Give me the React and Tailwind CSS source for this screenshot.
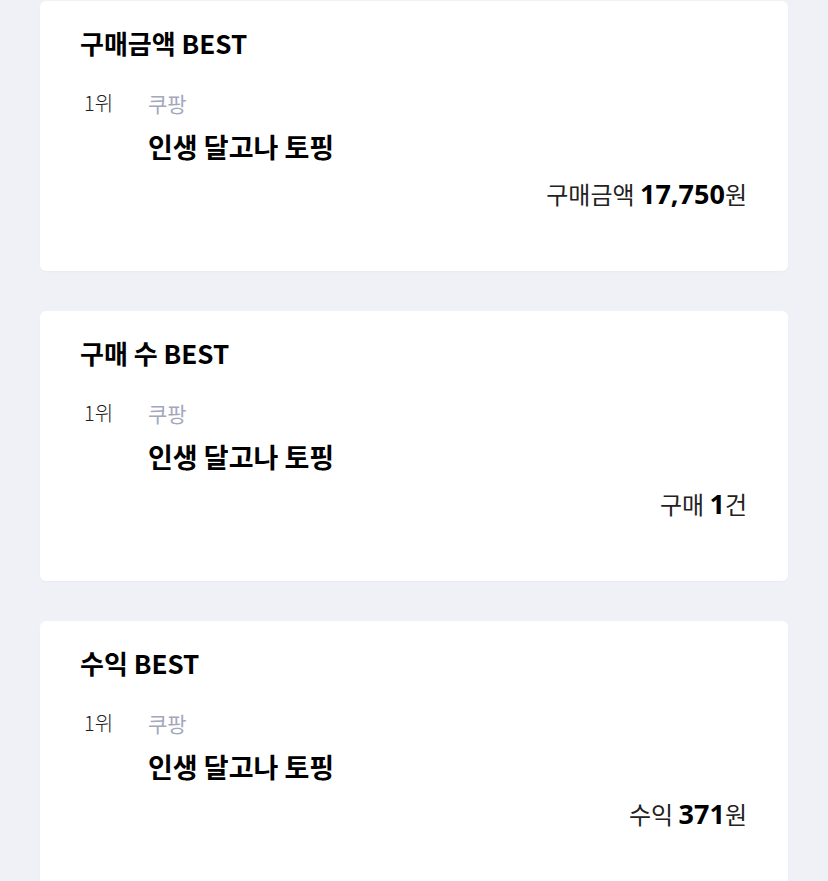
import React from "react";

const sections = [
  { title: "구매금액 BEST", label: "구매금액", value: "17,750", unit: "원" },
  { title: "구매 수 BEST", label: "구매", value: "1", unit: "건" },
  { title: "수익 BEST", label: "수익", value: "371", unit: "원" },
];

const BestCard = ({ item }) => (
  <div className="h-[270px] w-[748px] shrink-0 rounded-md bg-white px-10 pt-[24px] shadow-[0_1px_2px_rgba(0,0,0,0.03)]">
    {/* Title */}
    <h2 className="text-[26px] font-bold leading-[36px] text-black">{item.title}</h2>

    {/* Rank row */}
    <div className="mt-[27px] flex items-center leading-[30px]">
      <span className="w-[68px] pl-1 text-[20px] font-light text-[#222]">1위</span>
      <span className="text-[21px] text-[#a4a8bc]">쿠팡</span>
    </div>
    <p className="mt-[11px] pl-[68px] text-[27px] font-bold leading-[36px] text-black">인생 달고나 토핑</p>

    {/* Value */}
    <p className="mt-[11px] pr-[1px] text-right text-[24px] leading-[36px] text-[#222]">
      {item.label}{" "}
      <span className="font-['Noto_Sans','Noto_Sans_CJK_KR',sans-serif] text-[27px] font-bold text-black">
        {item.value}
      </span>
      {item.unit}
    </p>
  </div>
);

export default function App() {
  return (
    <div
      className="flex h-[881px] flex-col items-center gap-10 overflow-hidden bg-[#f0f1f6] pt-[1px]"
      style={{ fontFamily: '"Noto Sans CJK KR", "Noto Sans", sans-serif' }}
    >
      {sections.map((item) => (
        <BestCard key={item.title} item={item} />
      ))}
    </div>
  );
}
